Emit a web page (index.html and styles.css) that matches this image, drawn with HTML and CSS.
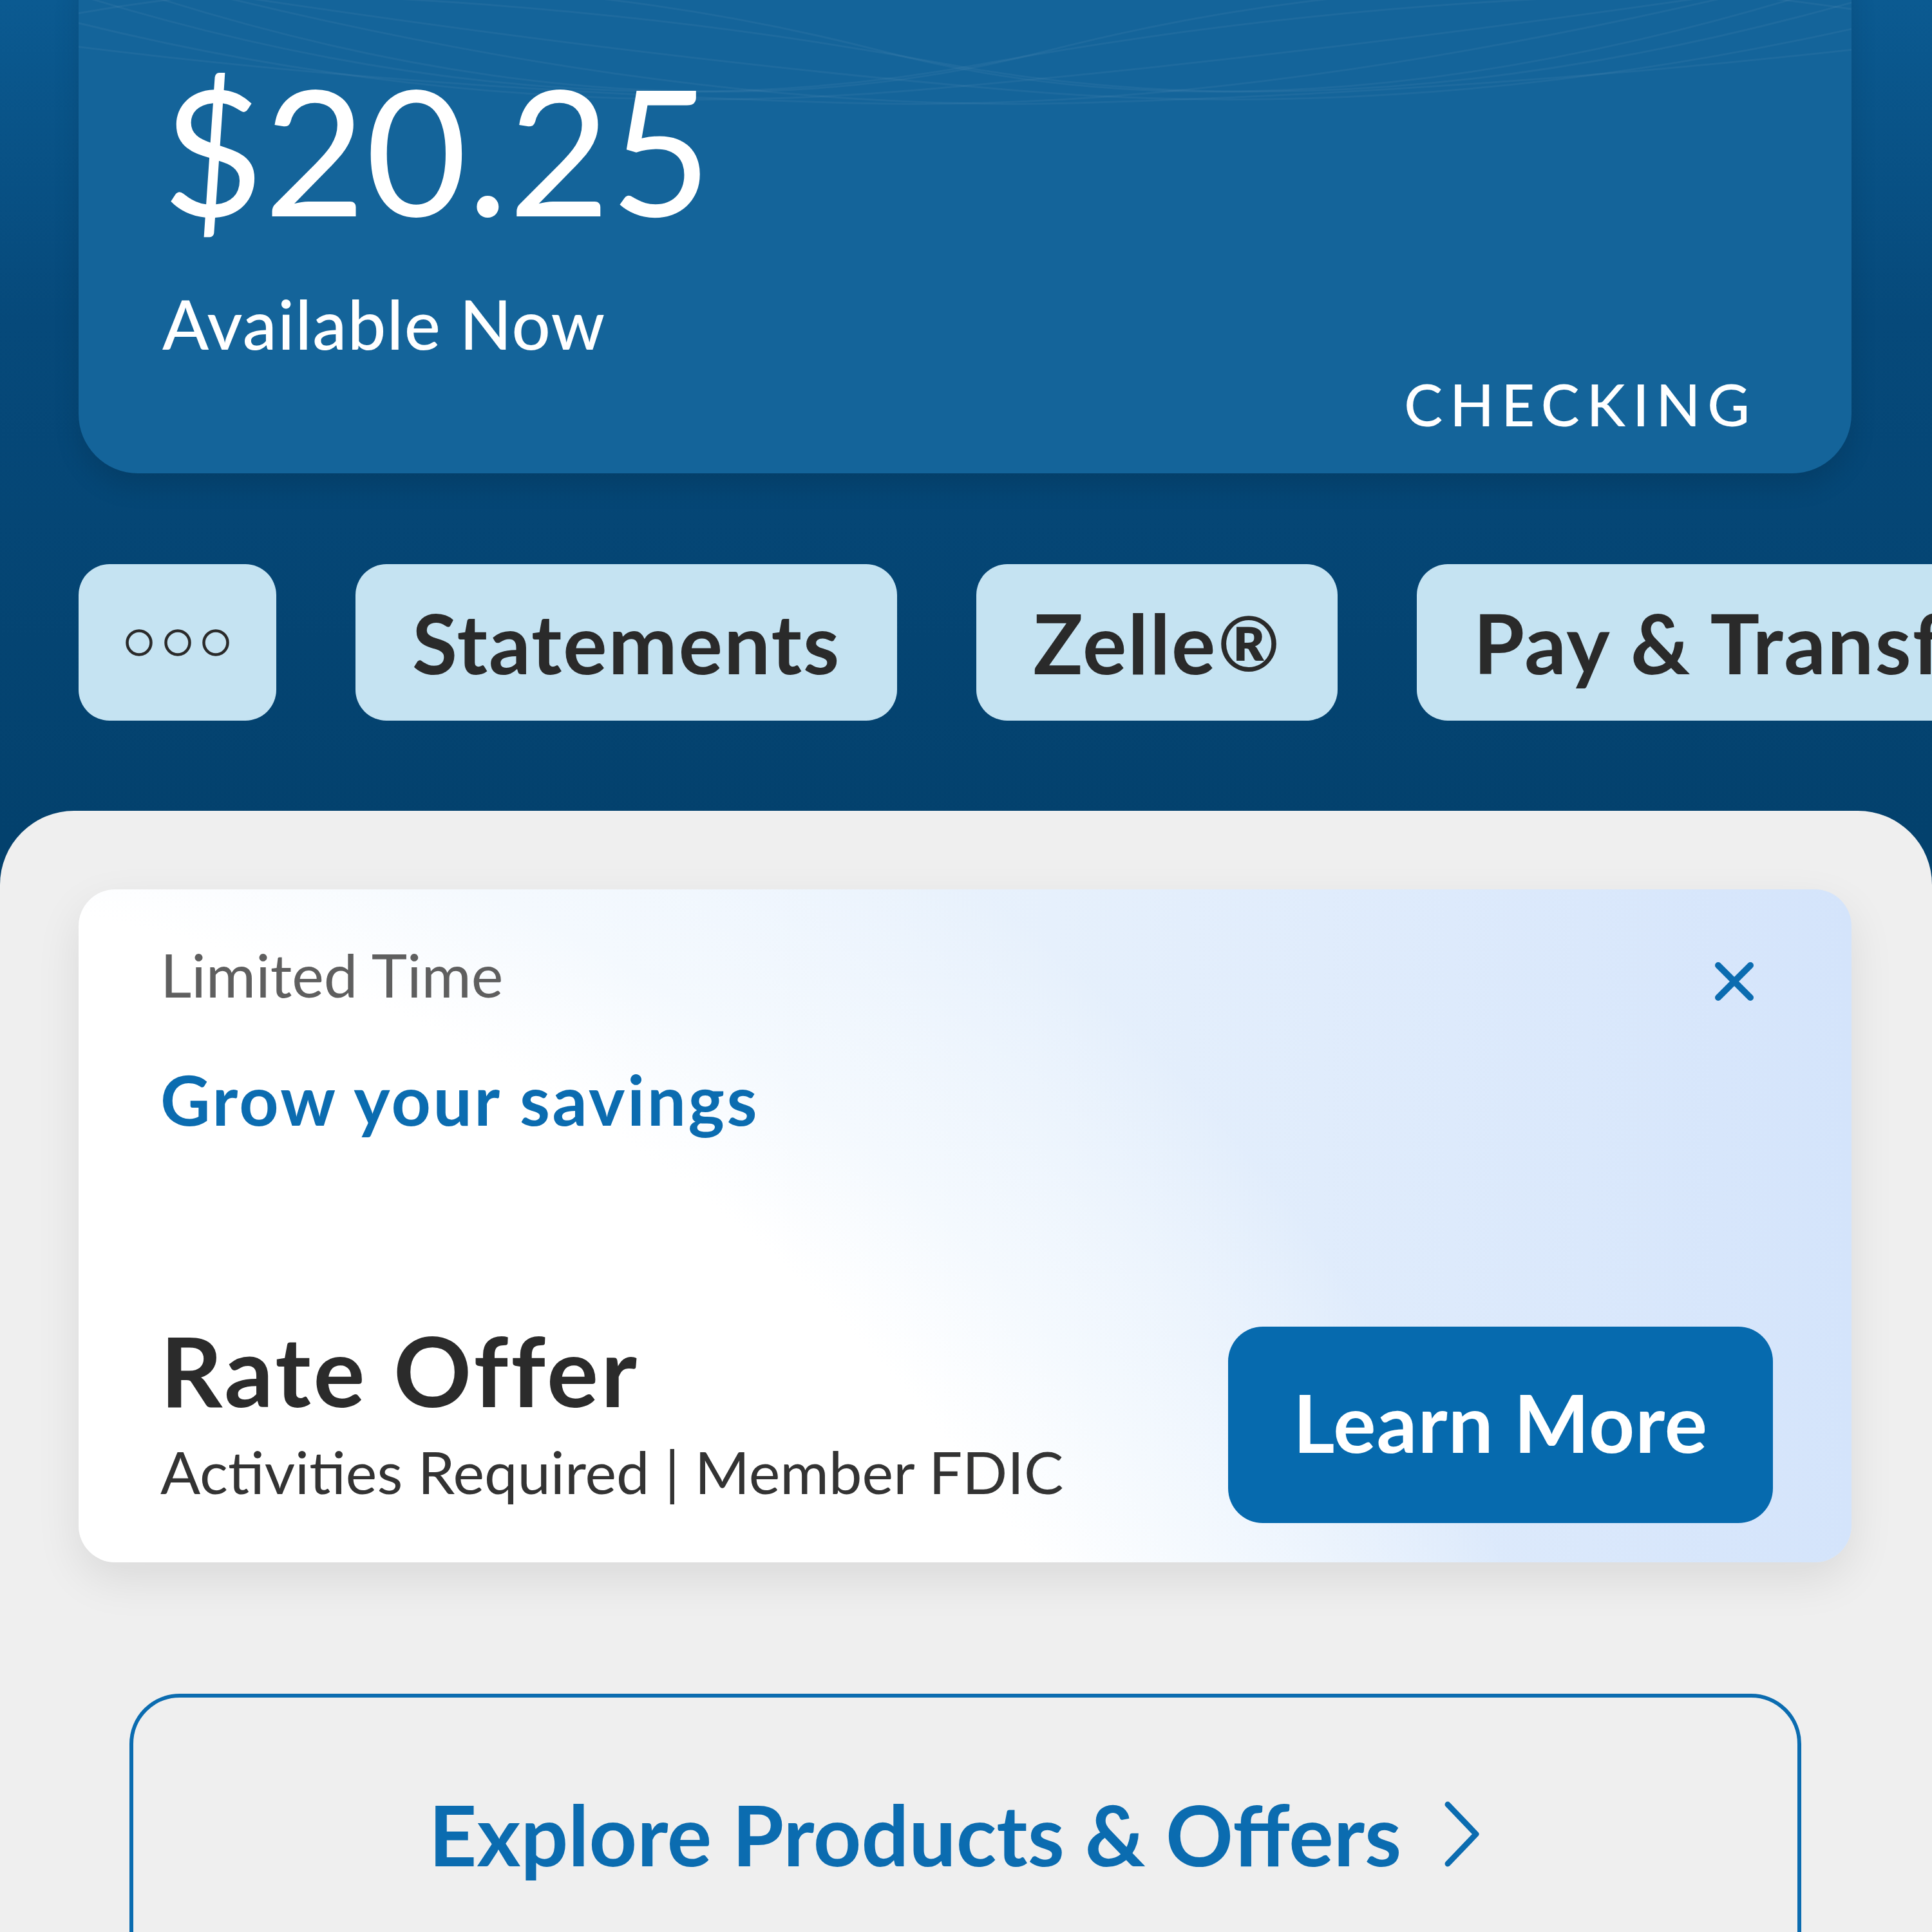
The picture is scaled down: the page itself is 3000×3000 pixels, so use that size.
FILE: index.html
```html
<!DOCTYPE html>
<html>
<head>
	<title>Checking Account</title>
	<link rel="stylesheet" href="styles.css">
</head>
<body>
	<div class="screen">
		<section class="top">
			<div class="balance">
				<svg class="pattern" width="2753" height="300" viewBox="0 0 2753 300" fill="none" stroke="#ffffff" stroke-opacity="0.045" stroke-width="3">
					<path d="M-100 60 Q 700 330 1400 200 T 2900 90"/>
					<path d="M-100 110 Q 600 300 1300 240 T 2900 40"/>
					<path d="M-100 20 Q 800 360 1500 180 T 2900 140"/>
					<path d="M-100 160 Q 500 240 1200 260 T 2900 10"/>
					<path d="M2900 60 Q 2050 330 1350 200 T -100 90"/>
					<path d="M2900 110 Q 2150 300 1450 240 T -100 40"/>
					<path d="M2900 20 Q 1950 360 1250 180 T -100 140"/>
					<path d="M2900 160 Q 2250 240 1550 260 T -100 10"/>
				</svg>
				<div class="amount">$20.25</div>
				<div class="available">Available Now</div>
				<div class="account-type">CHECKING</div>
			</div>
			<div class="actions">
				<button class="pill pill-more">
					<svg width="163" height="44" viewBox="0 0 163 44" fill="none" stroke="#2a2a2a" stroke-width="4.5">
						<circle cx="22" cy="22" r="18.5"/>
						<circle cx="82" cy="22" r="18.5"/>
						<circle cx="141" cy="22" r="18.5"/>
					</svg>
				</button>
				<button class="pill">Statements</button>
				<button class="pill">Zelle<span class="reg">®</span></button>
				<button class="pill">Pay &amp; Transfer</button>
			</div>
		</section>
		<section class="sheet">
			<div class="promo">
				<div class="promo-head">
					<div class="promo-tag">Limited Time</div>
					<svg class="close" width="64" height="64" viewBox="0 0 64 64" fill="none" stroke="#0b6cb0" stroke-width="10" stroke-linecap="round">
						<path d="M7 7 L57 57 M57 7 L7 57"/>
					</svg>
				</div>
				<div class="promo-title">Grow your savings</div>
				<div class="promo-foot">
					<div class="promo-text">
						<div class="promo-name">Rate Offer</div>
						<div class="promo-note">Activities Required | Member FDIC</div>
					</div>
					<button class="learn">Learn More</button>
				</div>
			</div>
			<a class="explore" href="#">
				<span>Explore Products &amp; Offers</span>
				<svg width="64" height="104" viewBox="0 0 64 104" fill="none" stroke="#0b6cb0" stroke-width="9" stroke-linecap="round" stroke-linejoin="round">
					<path d="M10 6 L54 52 L10 98"/>
				</svg>
			</a>
		</section>
	</div>
</body>
</html>
```

FILE: styles.css
```css
body {
	margin: 0;
	font-family: Lato, "Open Sans", sans-serif;
	background-color: #04416d;
}
.screen {
	width: 3000px;
	height: 3000px;
	overflow: hidden;
	background: linear-gradient(180deg, #0b5a91 0%, #06497a 500px, #03416d 1300px);
}
.top {
	padding-bottom: 140px;
}
.balance {
	position: relative;
	overflow: hidden;
	margin: -100px 125px 0 122px;
	padding: 195px 158px 63px 130px;
	background-color: #14649a;
	border-radius: 92px;
	box-shadow: 0 20px 40px rgba(0, 0, 0, 0.12);
	color: #fff;
}
.pattern {
	position: absolute;
	top: 0;
	left: 0;
}
.amount {
	position: relative;
	font-size: 272px;
	line-height: 1;
	font-weight: 400;
}
.available {
	margin-top: 82px;
	font-size: 106px;
	line-height: 1;
	font-weight: 500;
	letter-spacing: 1.5px;
}
.account-type {
	margin-top: 27px;
	font-size: 90px;
	line-height: 1;
	font-weight: 500;
	letter-spacing: 11px;
	text-align: right;
	margin-right: -11px;
}
.actions {
	display: flex;
	gap: 123px;
	margin: 141px 0 0 122px;
}
.pill {
	flex-shrink: 0;
	display: flex;
	align-items: center;
	justify-content: center;
	height: 243px;
	padding: 0 88px;
	border: none;
	border-radius: 48px;
	background-color: #c5e3f2;
	color: #2a2a2a;
	font-family: inherit;
	font-size: 128px;
	font-weight: 700;
	letter-spacing: 2px;
	white-space: nowrap;
}
.pill .reg {
	font-size: 116px;
	margin-left: 2px;
}
.pill-more {
	padding: 0 72px;
}
.sheet {
	height: 1741px;
	padding: 122px 125px 0 122px;
	background-color: #efefef;
	border-radius: 115px 115px 0 0;
}
.promo {
	display: flex;
	flex-direction: column;
	box-sizing: border-box;
	height: 1045px;
	padding: 85px 122px 61px 127px;
	border-radius: 57px;
	background:
		radial-gradient(circle 2900px at -420px 2250px, #ffffff 0, #ffffff 2250px, #f4f9fe 2480px, rgba(244, 249, 254, 0) 2900px),
		linear-gradient(90deg, #f4f9fe 0%, #e6f0fc 55%, #d4e4fb 100%);
	box-shadow: 0 26px 70px rgba(0, 0, 0, 0.09);
}
.promo-head {
	display: flex;
	justify-content: space-between;
	align-items: flex-start;
}
.promo-tag {
	font-size: 94px;
	line-height: 1;
	color: #5f5f5f;
}
.close {
	margin: 26px 28px 0 0;
}
.promo-title {
	margin-top: 93px;
	font-size: 107px;
	line-height: 1;
	font-weight: 700;
	letter-spacing: 3.5px;
	color: #0b6cb0;
}
.promo-foot {
	margin-top: auto;
	display: flex;
	justify-content: space-between;
	align-items: flex-end;
}
.promo-text {
	padding-bottom: 34px;
}
.promo-name {
	font-size: 150px;
	line-height: 1;
	font-weight: 700;
	letter-spacing: 4px;
	color: #2b2b2b;
}
.promo-note {
	margin-top: 37px;
	font-size: 92px;
	line-height: 1;
	color: #333;
}
.learn {
	height: 305px;
	width: 846px;
	padding-bottom: 10px;
	border: none;
	border-radius: 54px;
	background-color: #066aae;
	color: #fff;
	font-family: inherit;
	font-size: 124px;
	font-weight: 700;
	letter-spacing: 1px;
}
.explore {
	display: flex;
	justify-content: center;
	align-items: center;
	gap: 62px;
	height: 600px;
	box-sizing: border-box;
	margin: 204px 78px 0 79px;
	padding: 0 30px 164px 0;
	border: 6px solid #0b6cb0;
	border-radius: 78px;
	color: #0b6cb0;
	font-size: 130px;
	font-weight: 700;
	text-decoration: none;
}
```
